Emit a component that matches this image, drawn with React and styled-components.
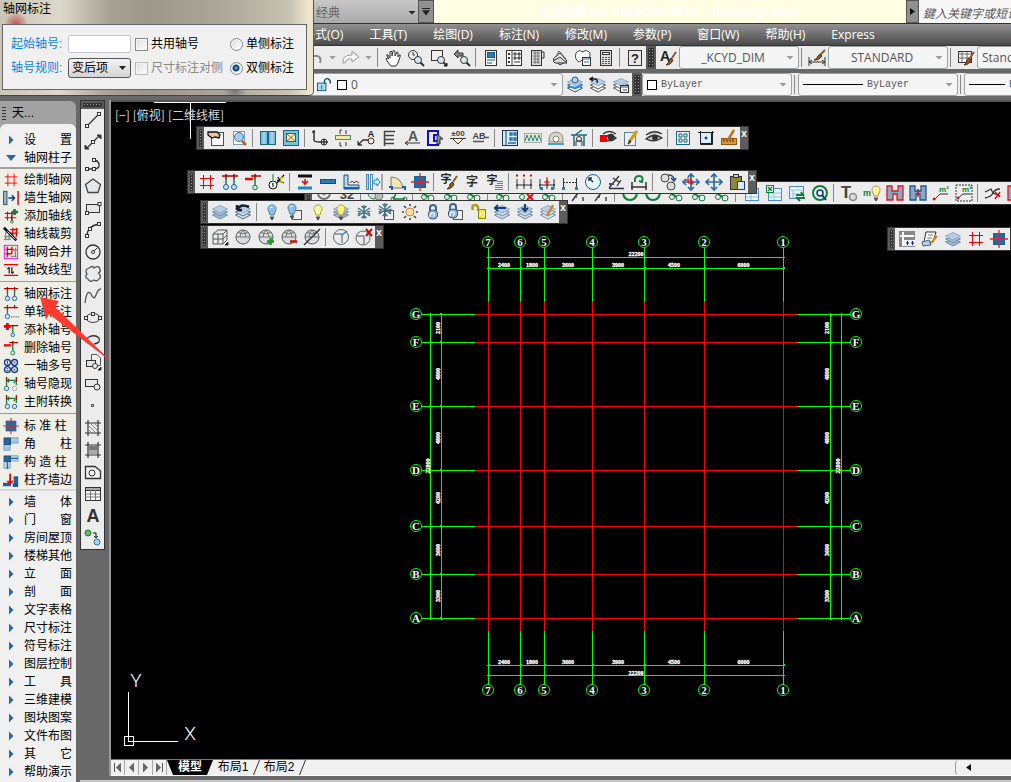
import { Fragment } from 'react'
import styled, { createGlobalStyle, css } from 'styled-components'

const P = ({ d, c = '#333', w = 1, f = 'none' }) => <path d={d} stroke={c} strokeWidth={w} fill={f} />
const C = ({ x = 9, y = 9, r = 6, c = '#333', f = 'none', w = 1 }) => <circle cx={x} cy={y} r={r} stroke={c} fill={f} strokeWidth={w} />
const R = ({ x, y, w, h, c = '#333', f = 'none' }) => <rect x={x} y={y} width={w} height={h} stroke={c} fill={f} />
const T = ({ x = 9, y = 13, s = 11, c = '#222', children }) => (
  <text x={x} y={y} fontSize={s} fill={c} fontWeight="700" textAnchor="middle">{children}</text>
)

const RED = '#f00000'
const BLUE = '#1c5f9e'
const GREEN = '#11803a'

const layersShape = (fill = '#9fb9d4', line = '#6f8eae') => (
  <>
    <P d="M1.500 12L9 9L16.500 12L9 16Z" c={line} f={fill} />
    <P d="M1.500 9L9 6L16.500 9L9 13Z" c={line} f={fill} />
    <P d="M1.500 6L9 2.500L16.500 6L9 10Z" c="#8fabc9" f="#b9cde2" />
  </>
)
const bulb = (fill, line) => (
  <>
    <P d="M9 2C5 2 4 6 6 9L7 12H11L12 9C14 6 13 2 9 2Z" c={line} f={fill} />
    <P d="M7 14.500H11M8 16H10" c="#555" w={2} />
    <P d="M7 5Q8 3.500 9.500 4" c="#fff" />
  </>
)
const snow = <P d="M9 2V16M3 5L15 13M3 13L15 5M6.500 3L9 5.500L11.500 3M6.500 15L9 12.500L11.500 15M2.500 8L5.500 9L3 11.500M15.500 8L12.500 9L15 11.500" c="#3b6f80" w={1.300} />
const lock = <><P d="M6 9V5Q6 2 9 2T12 5V9" c="#40658c" w={2} /><P d="M4.500 10Q5 7 9 7T13.500 10V13Q13 16 9 16T4.500 13Z" c="#345d8a" f="#8db4dd" /><P d="M6 14Q6 9 9 10T9 14" c="#fff" w={1.300} /></>
const brush = <><P d="M17 3L13 9" c="#8f5a29" w={2} /><P d="M12 9L14 11Q12 16 7 16Q10 14 10 11Z" c="#5c3210" f="#93561f" /></>
const lens = <><C x={11} y={11} r={3.500} f="#dde8ee" /><P d="M13.500 13.500L17 17" c="#333" w={2} /></>
const sphere = <><C r={7} c="#555" f="#d9dde1" /><P d="M2 9H16M4 4.500Q9 7 14 4.500M6 9Q6 5 9 2M12 9Q12 5 9 2" c="#777" /></>
const dimLine = <P d="M2 6V16M9 6V16M16 6V16M1 12H17M1 13L3 11M8 13L10 11M15 13L17 11" />
const roundPair = <><C x={5} y={14} r={2.500} c={BLUE} f="#cfe4f5" /><C x={13} y={14} r={2.500} c={BLUE} f="#cfe4f5" /></>
const pane = <R x={6.500} y={7.500} w={9} h={9} c="#555" f="#eee" />
const cross = <P d="M10 10L16 16M16 10L10 16" c="#e01010" w={2} />
const page = <><R x={3.500} y={2.500} w={11} h={13} c="#8a9bb4" f="#fff" /><P d="M6 6H12M6 8.500H12M6 11H10" c="#6a7f9a" /></>

const icons = {
  // drawing strip
  line: <><P d="M4 14L14 4" w={1.300} /><R x={1.500} y={13.500} w={3} h={3} f="#fff" /><R x={13.500} y={1.500} w={3} h={3} f="#fff" /></>,
  xline: <><P d="M3 15L15 3" w={1.300} /><P d="M1 16V12L5 16ZM17 2V6L13 2Z" f="#333" /><R x={7.500} y={7.500} w={3} h={3} f="#fff" /></>,
  pline: <><P d="M3 14H11Q16 13 15 9T9 5" w={1.300} /><R x={1.500} y={12.500} w={3} h={3} f="#fff" /><R x={8.500} y={12.500} w={3} h={3} f="#fff" /><R x={8.500} y={3.500} w={3} h={3} f="#fff" /></>,
  polygon: <P d="M9 2L16.500 7.500L14 15.500H4L1.500 7.500Z" c="#444" w={1.300} f="#e4e8eb" />,
  rect: <><R x={2.500} y={5.500} w={13} h={8} f="#e4e8eb" /><R x={1.500} y={12.500} w={3} h={3} f="#fff" /><R x={14} y={3.500} w={3} h={3} f="#fff" /></>,
  arc: <><P d="M3 15Q3 5 15 3" w={1.300} /><R x={1.500} y={13.500} w={3} h={3} f="#fff" /><R x={4.500} y={6.500} w={3} h={3} f="#fff" /><R x={13.500} y={1.500} w={3} h={3} f="#fff" /></>,
  circle: <><C r={7} w={1.300} f="#eef0f2" /><P d="M9 9L13 5" /><C r={1.500} f="#fff" /></>,
  cloud: <P d="M5 3Q9 0 10 3Q15 0 16 4Q17 7 14.500 8Q18 12 15 14Q13 17 10 15Q6 18 4 14Q0 12 3 9Q0 5 5 3Z" c="#555" w={1.300} f="#e8ebed" />,
  spline: <P d="M1 16Q3 1 7 7Q10 14 12 8Q14 2 17 2" c="#555" w={1.300} />,
  ellipse: <><ellipse cx="9" cy="9" rx="7" ry="4.500" fill="#e8ebed" stroke="#444" /><R x={0.500} y={7.500} w={3} h={3} f="#fff" /><R x={14.500} y={7.500} w={3} h={3} f="#fff" /><R x={7.500} y={3.500} w={3} h={3} f="#fff" /></>,
  ellipseArc: <P d="M4 12Q1 8 5 6Q11 3 15 7Q17 12 10 13" w={1.300} f="#e8ebed" />,
  insert: <><P d="M7.500 1.500H13L16.500 5V12.500H7.500Z" c="#555" f="#eee" /><R x={2.500} y={7.500} w={9} h={6} f="#dfe3e8" /><C x={11} y={13} r={2.500} f="#eee" /><P d="M17 17V14L14 17Z" f="#111" /></>,
  block: <><R x={1.500} y={4.500} w={12} h={7} f="#e4e8eb" /><C x={13} y={12} r={3} f="#e4e8eb" /></>,
  point: <R x={7.500} y={7.500} w={2} h={2} c="#555" />,
  hatch: <><P d="M1 4H17M1 14H17M4 1V17M14 1V17" w={1.200} /><P d="M4 10L8 14M4 6L12 14M6 4L14 12M10 4L14 8" c="#888" /></>,
  gradient: <><P d="M1 4H17M1 14H17M4 1V17M14 1V17" w={1.200} /><R x={5.500} y={5.500} w={7} h={4} c="#777" f="#777" /><R x={5.500} y={9.500} w={7} h={3} c="#aaa" f="#aaa" /></>,
  region: <><P d="M1.500 3.500H11L16.500 8V15.500H1.500Z" f="#eef0f2" w={1.300} /><C x={8} y={10} r={3} /></>,
  table: <><R x={1.500} y={2.500} w={15} h={13} f="#fff" /><R x={1.500} y={2.500} w={15} h={3} f="#aaa" /><P d="M1 9H16M1 12H16M6.500 5V15M11.500 5V15" c="#777" /></>,
  text: <T y={15} s={18} c="#333">A</T>,
  addSel: <><C x={4} y={4} r={3} c={GREEN} f="#76b65a" /><C x={13} y={13} r={3} c="#2878b8" f="#a8d4f5" /><P d="M9 4H12V8M10 7L12 9L14 7" c="#111" /></>,

  // axis commands
  grid: <P d="M5.500 2V16M12.500 2V16M2 5.500H16M2 12.500H16" c={RED} />,
  wallAxis: <><R x={0.500} y={1.500} w={4} h={15} c="#285070" f="#8fb4cc" /><P d="M6 9H13M10 6L13 9L10 12" c="#123a70" w={1.500} /><P d="M17 1V17" c="#c00000" w={1.500} /></>,
  axisAdd: <><P d="M5 4V14M10 4V15M2 6H15M2 11H15" c={RED} w={1.300} /><P d="M13 1V8M10 4.500H17" c={GREEN} w={3} /><P d="M10 8V14" c="#5a1010" /><C x={10} y={15.500} r={1.500} c={GREEN} /></>,
  axisCut: <><P d="M3 7V16M7 9V16M1 12H9M1 15H9" c="#888" w={1.500} /><P d="M11 2V12M15 2V12M8 4H17M8 8H17" c={RED} w={1.500} /><P d="M1 2L15 16" c="#111" w={3} /><P d="M5 6L14 15" c="#fff" /></>,
  axisMerge: <><R x={1.500} y={1.500} w={15} h={15} c="#f000f0" /><P d="M5 3V15M10 3V11M3 6H12M3 11H10" c={RED} w={1.500} /><P d="M14 4V15M9 14H15M12 7H16" c="#888" w={1.500} /></>,
  axisType: <><P d="M1 3H17M1 15H17" c={RED} w={1.500} /><P d="M7 6V13M10 6V13M5 8L7 6M10 13L12 11" c="#111" w={1.300} /></>,
  axisDim: <><P d="M1 3H17M5 1V6M13 1V6" c="#b00000" w={1.500} /><P d="M5 5V12M13 5V12" c="#1e7a46" w={1.500} />{roundPair}</>,
  axisOne: <><P d="M1 4H17M5 1V6M13 1V5" c="#c00000" w={1.500} /><P d="M5 5V11" c="#1e7a46" w={1.500} /><C x={5} y={14} r={2.500} c={BLUE} f="#cfe4f5" /><path d="M9 14.500H18" stroke="#222" strokeDasharray="1 1" /></>,
  axisPlus: <><P d="M1 5H9M5 1V9" c={RED} w={3} /><P d="M9 4H17M11 4V6" c="#b00000" w={1.300} /><P d="M11 5V12" c={GREEN} w={1.500} /><C x={11} y={14.500} r={2} c={BLUE} f="#cfe4f5" /></>,
  axisDel: <><P d="M1 6H9" c={RED} w={2.500} /><P d="M7 3H17M11 1V6" c="#b00000" w={1.500} /><P d="M11 5V12" c={GREEN} w={1.500} /><C x={11} y={14.500} r={2.300} c={GREEN} f="#cfe4f5" /></>,
  axisMulti: <><C x={5} y={5} r={3.300} c="#123a8c" w={1.500} /><C x={13} y={5} r={3.300} c="#123a8c" w={1.500} /><C x={5} y={13} r={3.300} c="#123a8c" w={1.500} /><C x={13} y={13} r={3.300} c="#123a8c" w={1.500} /><P d="M5 3V7M4 12H6M4 14H6M12 4L14 6M14 4L12 6M12 12L14 14M14 12L12 14" c="#123a8c" /></>,
  axisHide: <><P d="M4 1V7M15 1V7" c="#c00000" w={1.500} /><P d="M4 7V12M15 7V10" c={GREEN} w={1.500} /><P d="M5 5H14M7 3L5 5L7 7M12 8L14 6" c={GREEN} w={1.500} /><C x={4} y={14} r={2.500} c={BLUE} f="#cfe4f5" /><C x={13} y={14} r={2.500} c="#aaa" /></>,
  axisSwap: <><P d="M4 1V7M15 1V7" c="#c00000" w={1.500} /><P d="M4 7V12M15 7V10" c={GREEN} w={1.500} /><P d="M5 5H14M7 3L5 5L7 7M12 8L14 6" c={GREEN} w={1.500} />{roundPair}</>,
  axisKey: <><P d="M6 1V7" c={GREEN} /><P d="M10 10L17 2M10 7L17 10M11 4L13 8" c="#111" w={1.300} /><P d="M13 6L17 4M12 9H16" c="#d8d000" w={1.500} /><C x={6} y={12} r={4} c="#111" f="#fff" /><P d="M6 10V14M5 11H6" c="#111" /></>,

  // columns
  column: <><R x={3.500} y={3.500} w={11} h={11} c={BLUE} f="#1c6ca8" /><P d="M9 0V18M0 9H18" c="#f02020" w={1.300} /></>,
  corner: <><P d="M1 2H17V8H8V16H1Z" c="#6aa0c8" f="#a4c8e0" /><R x={1.500} y={2.500} w={7} h={7} c="#174a78" f="#23689c" /></>,
  builtCol: <><P d="M1 2H17V8H8V16H1Z" c="#6aa0c8" f="#c0d8ea" /><R x={1.500} y={2.500} w={7} h={6} c="#174a78" f="#23689c" /><P d="M8 5H17M5 9V17" c="#23689c" w={1.500} /></>,
  colAlign: <><P d="M0 14H9M11 15H17" c={BLUE} w={4} /><R x={12.500} y={5.500} w={4} h={9} c="#174a78" f="#23689c" /><P d="M8 2V13M5 10L8 13L11 10" c={RED} w={2} /></>,
  wallLevel: <><P d="M2 3H16" c="#111" w={3} /><P d="M2 15H16" c="#1b88c8" w={3} /><P d="M9 6V12M6 8L9 11L12 8" c={RED} w={1.500} /></>,
  wall: <R x={1.500} y={6.500} w={15} h={4} c="#1c4e7c" f="#2a7ab8" />,
  wallHatch: <><P d="M2 2H6V12H17V16H2Z" c="#1c4e7c" f="#b7d8ee" /><P d="M8 10L10 8L12 10L14 8L17 10" c="#a01818" /><P d="M2 15H17" c={BLUE} w={2} /></>,
  wallMove: <><R x={1.500} y={1.500} w={2} h={15} c="#4a8cb8" f="#a8d8f0" /><R x={5.500} y={1.500} w={2} h={15} c="#4a8cb8" f="#fff" /><P d="M9 7H12V5L15 9L12 13V11H9Z" c="#1c88d0" f="#d8f0ff" /><P d="M17 1V17" c="#666" /></>,
  doorArc: <><P d="M3 15V4Q13 4 15 15Z" f="#f0e8ac" c="#777" /><P d="M1 14H4V17M14 14H17V17" c={BLUE} w={2} /></>,

  // general tools
  hand: <P d="M5 10L3 7Q2 5 4 6L6 9V3Q7 1 8 3V7L9 2Q10 0 11 3V7L13 3Q14 2 14 5V8L15 6Q17 5 16 8L14 14L12 17H7L3 12Q1 9 3 9Z" f="#fff" />,
  handBox: <><R x={4.500} y={3.500} w={12} h={13} c="#1d6072" f="#fff" /><P d="M1 3H10L13 6L12 9L8 8L5 9L1 6Z" c="#111" f="#edc3a0" w={1.300} /></>,
  zoomClock: <><C x={6} y={6} r={4.500} f="#e8eef2" /><P d="M6 3V6H8" />{lens}</>,
  zoomBox: <><R x={1.500} y={1.500} w={11} h={10} f="#eee" />{lens}<P d="M17 14V17H14Z" f="#111" /></>,
  zoomBack: <><P d="M1 5L5 1V4H10V7H5V9Z" f="#888" />{lens}</>,
  preview: <>{page}<C x={9} y={8} r={4.500} c="#3c78b4" f="#a8cdec" /><P d="M12 12L16 16" c="#a86820" w={2.500} /></>,
  undo: <P d="M3 4L1 7L6 10M2 7H11Q16 8 14 14" c="#888" w={2} />,
  redo: <P d="M1 14Q0 7 8 6H10V2L17 8L10 13V10H7Q4 10 3 14Z" c="#999" f="#f8f8f8" />,
  props: <><R x={3.500} y={1.500} w={11} h={15} f="#fff" /><R x={5.500} y={3.500} w={7} h={5} c="#17578c" f="#2c79b8" /><P d="M5 11H13M5 14H10" c="#17578c" /></>,
  center: <><R x={1.500} y={1.500} w={15} h={15} f="#fff" /><P d="M4 4V6M4 8V10M4 12V14" w={2} /><P d="M7 2V16" /><P d="M9 4H11V6H9ZM13 4H15V6H13ZM9 8H11V10H9ZM13 8H15V10H13Z" f="#ccc" /><P d="M9 13H15" /></>,
  palettes: <><R x={3.500} y={1.500} w={10} h={15} f="#ddd" /><P d="M5 4H12M5 7H12M5 10H12M5 13H12M7 2V15M10 2V15" c="#777" /><P d="M13 3H16V9H13" /></>,
  sheets: <><P d="M2 10L9 4L16 12L9 16Z" f="#eee" /><P d="M5 8L8 2L15 10" c="#555" /><P d="M2 12L9 8L16 14H4Z" f="#d8d8d8" /></>,
  markup: <><P d="M2 4Q5 0 8 3Q13 0 16 4Q17 8 14 9Q8 10 5 13Q0 10 2 4Z" c="#444" f="#fff" /><R x={8.500} y={8.500} w={8} h={8} f="#fff" /><P d="M8 10H16M10 13H15" c="#2c79b8" /></>,
  calc: <><R x={3.500} y={1.500} w={11} h={15} f="#ddd" /><R x={5.500} y={3.500} w={7} h={2} f="#fff" /><path d="M6 8V15M9 8V15M12 8V15" stroke="#555" strokeWidth="2" strokeDasharray="1 1" /></>,
  help: <><R x={2.500} y={1.500} w={13} h={15} f="#e8e8e8" /><T y={14} s={13}>?</T></>,
  textStyle: <><T x={6} y={12} s={14}>A</T>{brush}</>,
  dimStyle: <><P d="M1 8V17M17 8V17M1 13H17M4 11L1 13L4 15M14 11L17 13L14 15" /><P d="M17 1L12 6" c="#8f5a29" w={2} /><P d="M12 5L14 7Q11 12 6 11Q9 10 10 7Z" c="#5c3210" f="#93561f" /></>,
  tableStyle: <><R x={1.500} y={2.500} w={13} h={11} f="#fff" /><P d="M1 5H14M1 9H14M5 3V13M10 3V13" c="#666" />{brush}</>,
  unlock: <><R x={1.500} y={7.500} w={9} h={8} c="#20546c" f="#a8def5" /><P d="M9 8V5Q10 2 13 3Q16 5 15 8" c="#20546c" w={1.500} /><P d="M6 10V14" c="#20546c" /></>,

  // layers
  layers: layersShape(),
  layersDark: <>{layersShape('#d5dfe8', '#4d708a')}<P d="M3 7Q6 0 15 4M3 7L3 2M3 7L8 7" c="#123" w={2.500} /></>,
  layerTop: <>{layersShape('#fff', '#38566e')}<C x={9} y={4} r={3} c="#38566e" f="#a8d8f5" /><P d="M2 10L9 12L16 9" c="#1d8be0" w={2} /></>,
  layerPrev: <>{layersShape('#fff', '#555')}<P d="M1 3H7Q9 4 8 7M4 1L1 3L4 5" c="#111" w={1.300} /></>,
  layerState: <>{layersShape('#fff', '#555')}<R x={8.500} y={9.500} w={8} h={7} f="#fff" /><P d="M9 11H16M11 14H15" c="#17578c" /></>,
  layerBack: <>{layersShape('#cfdae6')}<P d="M2 5H13M5 2L2 5L5 8" c="#183f70" w={2} /></>,
  layerDown: <>{layersShape('#cfdae6')}<P d="M9 1V8M6 5L9 8L12 5" c="#183f70" w={2} /></>,
  layerEdit: <>{layersShape('#e2eaf1')}<P d="M14 2L8 13" c="#d48418" w={2.500} /></>,
  bulbBlue: bulb('#8fc0e8', '#4880ac'),
  bulbPane: <>{pane}<g transform="translate(-3 -1)">{bulb('#8fc0e8', '#4880ac')}</g></>,
  bulbOn: bulb('#fff8a0', '#b0a030'),
  bulbLayer: <>{layersShape()}{bulb('#ffef80', '#c0a030')}</>,
  snow,
  snowPane: <>{pane}<g transform="translate(-2 -2)">{snow}</g></>,
  sun: <><C r={4} c="#c08838" f="#ffe0a8" /><P d="M9 1V3M9 15V17M1 9H3M15 9H17M3 3L5 5M13 13L15 15M3 15L5 13M13 5L15 3" c="#444" w={1.500} /></>,
  lock,
  lockPane: <>{pane}<g transform="translate(-3 -1)">{lock}</g></>,
  lockOpen: <><P d="M3 7Q1 2 5 2T8 8" c="#a8a010" w={2.500} /><R x={8.500} y={6.500} w={7} h={9} c="#8c8600" f="#f0e848" /><P d="M10 13Q12 7 14 10T13 14" c="#fff" /></>,

  // solids
  box: <><P d="M2 6L7 2H16V12L12 16H2ZM2 6H12V16M12 6L16 2M7 6V16M2 11H12L16 7" f="#e8ecef" c="#555" /><P d="M17 14V17H14Z" f="#111" /></>,
  sphere,
  sphereAdd: <>{sphere}<P d="M10 13.500H17M13.500 10V17" c="#16a016" w={2.500} /></>,
  sphereSub: <>{sphere}<P d="M10 13.500H17" c="#c01010" w={2.500} /></>,
  sphereCut: <>{sphere}<P d="M1 17L17 1" w={1.500} /></>,
  cube: <><C r={7.500} c="#666" f="#e8ecef" /><P d="M3 6H10V15" c="#555" /><P d="M10 7L15 3" c="#1880d8" w={1.500} /></>,
  cubeDel: <><C x={8} y={10} r={7} c="#666" f="#e8ecef" /><P d="M2 8H9V16" c="#555" /><P d="M11 1L17 8M17 1L11 8" c="#c01010" w={2} /></>,

  // architecture
  windowDouble: <><R x={1.500} y={2.500} w={15} h={13} c="#1e6288" f="#7cc0e0" /><P d="M9 2V16" c="#1e6288" w={2} /><P d="M5 3V15M13 3V15" c="#c8e8f4" /></>,
  windowCross: <><R x={1.500} y={1.500} w={15} h={15} c="#1e6288" f="#7cc0e0" /><R x={4.500} y={4.500} w={9} h={8} c="#555" f="#f4eca0" /><P d="M5 5L13 12M13 5L5 12" c="#777" /></>,
  pipe: <><P d="M1 3H4M3 1V11Q3 13 9 13H17M13 10V16" w={1.500} /><C x={13} y={13} r={3} /></>,
  beam: <><R x={1.500} y={6.500} w={15} h={4} c="#3e88a8" f="#eeeaa8" /><P d="M6 1V5M6 1H8M12 1V5M6 13V17M6 17H8M12 13V17" c="#333" /></>,
  leader: <><P d="M1 16L6 11H12M1 16V12M1 16H5" w={1.300} /><T x={14} y={8} s={9}>A</T><C x={14} y={12} r={3} /></>,
  elevation: <P d="M4.500 2V17M4 2.500H15M4 6.500H14M4 10.500H14M4 14.500H14" c="#444" w={1.500} />,
  textA: <><T x={10} y={12} s={14} c="#555">A</T><P d="M2 14H17M5 12L2 14L5 16" /></>,
  stair: <><P d="M2 2H12V6H8V12H12V16H2Z" c="#1010c8" w={2} /><P d="M11 5L17 10H14V15H11Z" c="#333" f="#888" /></>,
  level: <><T y={7} s={8} c="#444">±00</T><P d="M1 9.500H17M4 10L9 15L14 10" f="#fff8cc" /></>,
  ab: <><T x={7} y={10} s={9} c="#444">AB</T><P d="M1 12.500H12M13 8.500H17" c="#555" w={1.300} /></>,
  plan: <><R x={1.500} y={1.500} w={15} h={15} c="#1a3660" f="#d8ecfa" /><P d="M5 2V16M9 4H11V6H9ZM13 4H15V6H13ZM9 9H11V11H9ZM13 9H15V11H13ZM7 14H15" c="#2868a8" w={1.300} /></>,
  wave: <><R x={0.500} y={4.500} w={17} h={9} c="#aa9" f="#ecebc0" /><P d="M1 12L3 6L5 12L7 6L9 12L11 6L13 12L15 6L17 12" c="#258aa8" /></>,
  dome: <><P d="M2 13Q1 4 9 3Q17 4 16 13Z" c="#888" f="#dcd8c0" /><C x={9} y={10} r={3} c="#888" f="#fff" /><P d="M1 15H17" c="#4a9fc0" w={2} /></>,
  house: <><P d="M1 6H17M4 6V17M14 6V17M5 6L12 1" c="#216b84" w={1.500} /><C y={10} r={2.500} /><P d="M6 17V12H12V17" /></>,
  eye: <><P d="M1 6Q9 0 17 5M1 10Q9 3 17 9Q9 14 1 10Z" c="#333" f="#ccc" w={1.300} /><C x={10} y={8.500} r={2.500} f="#333" /></>,
  eyeRed: <><P d="M4 5Q10 0 17 5M5 10Q10 3 17 9Q12 14 5 10Z" w={1.500} /><C x={12} y={8} r={3} f="#333" /><R x={1.500} y={6.500} w={6} h={6} c={RED} f={RED} /></>,
  edit: <><R x={2.500} y={3.500} w={11} h={13} c="#68809c" f="#e8f2fc" /><P d="M15 2L7 13" c="#d89818" w={3} /><P d="M8 11L6 15L9 13" f="#333" /></>,
  views: <><R x={2.500} y={2.500} w={13} h={13} c="#1a6690" /><P d="M5 5H8V8H5ZM10 5H13V8H10ZM5 10H8V13H5ZM10 10H13V13H10Z" c="#1a6690" /></>,
  viewDot: <><P d="M1 3.500H17M3.500 2V15.500H15.500V2" c="#222" /><R x={3.500} y={3.500} w={11} h={11} c="#222" f="#d8eefc" /><C r={1} f="#111" /></>,
  ruler: <><R x={1.500} y={9.500} w={15} h={6} c="#8c5814" f="#d89838" /><P d="M4 10V13M7 10V13M10 10V13M13 10V13" /><P d="M14 1L8 11" c="#b87820" w={2.500} /></>,
  ziBrush: <><T x={6} y={10} s={11}>字</T>{brush}</>,
  zi: <T y={13} s={12} c="#333">字</T>,
  ziPara: <><T x={6} y={11} s={11}>字</T><P d="M11 8.500H17M11 10.500H17M9 12.500H17M9 14.500H17M9 16.500H17" c="#4888c0" /></>,
  dimRed: <>{dimLine}<P d="M2 1V4M9 1V4M16 1V4M1 2.500H3M8 2.500H10M15 2.500H17" c={RED} /></>,
  dimMid: <>{dimLine}<P d="M9 4V13M6 9H12" c={RED} /><P d="M2 15.500H5M13 15.500H16" c="#1880d0" w={3} /></>,
  dimDash: <><P d="M2.500 5V14M15.500 5V14" /><path d="M2 9.500H16" stroke="#333" strokeDasharray="2 1" /><P d="M1 15.500H4M14 15.500H17" c="#1880d0" w={3} /></>,
  compass: <><C r={7.500} c="#1c5f9e" f="#eaf4fb" /><P d="M9 9L5 5M5 8V5H8" w={1.500} /></>,
  angle: <><P d="M2 15L12 3M2 15.500H17M6 5L12 9M10 13L14 7" w={1.300} /><P d="M2 11H7" c={BLUE} w={2} /></>,
  dimTurn: <><P d="M2 9V17M16 9V17M1 14H17" w={1.500} /><P d="M5 9Q4 3 9 3T12 9L9 8" c={GREEN} w={2} /></>,
  chain: <><C x={6} y={5} r={4} c="#444" f="#ddd" /><C x={12} y={13} r={4} c="#444" f="#ddd" /><P d="M9 2Q15 2 15 7M12 5L15 8L17 5" c="#17578c" w={1.500} /></>,
  move: <P d="M9 2V16M2 9H16M6 4L9 1L12 4M6 14L9 17L12 14M4 6L1 9L4 12M14 6L17 9L14 12" c="#2a6ba8" w={1.700} />,
  moveRed: <><P d="M9 2V16M2 9H16M6 4L9 1L12 4M6 14L9 17L12 14M4 6L1 9L4 12M14 6L17 9L14 12" c="#2a6ba8" w={1.700} /><P d="M3 7H10V12M6 4V10H12" c={RED} /></>,
  paste: <><R x={2.500} y={3.500} w={11} h={13} c="#333" f="#8c8838" /><R x={5.500} y={1.500} w={5} h={3} f="#ccc" /><R x={9.500} y={8.500} w={7} h={8} c="#1d3890" f="#dce8fa" /></>,

  // attributes bar
  gear: <><C r={6} c="#777" w={2} /><C r={2} c="#777" /></>,
  num: <T y={15} s={13} c="#444">32</T>,
  greenTri: <><C x={7} r={6} c={GREEN} f="#ddd" /><C x={12} y={12} r={4} c="#777" f="#bbb" /></>,
  node: <><P d="M3 15L9 4M3 15H15" c={GREEN} w={1.500} /><C x={3} y={15} r={2} c={GREEN} /><C x={15} y={15} r={2} c={GREEN} /></>,
  nodes: <><C x={5} y={13} r={2.500} c={GREEN} /><C x={12} y={14} r={3} c={GREEN} /><P d="M3 9L10 13" c={GREEN} w={2} /></>,
  nodesDel: <><C x={5} y={13} r={2.500} c={GREEN} />{cross}</>,
  tool: <P d="M3 17L12 5M5 13H8M14 13V17" c="#444" w={1.500} />,
  arcGreen: <P d="M2 9Q3 16 9 16T16 9" c={GREEN} w={2} />,
  sheetGreen: <><R x={3.500} y={4.500} w={13} h={12} c="#4a8cc8" f="#eaf4ff" /><P d="M4 9H16M4 13H16M9 9V16" c="#98c0e0" /><R x={1.500} y={1.500} w={7} h={7} c={GREEN} f="#fff" /><P d="M3 3L7 7M7 3L3 7" c={GREEN} w={1.500} /></>,
  sheetSync: <><R x={1.500} y={2.500} w={14} h={12} c="#4a8cc8" f="#eaf4ff" /><P d="M1 6H15M5 6V14M5 10H15" c="#98c0e0" /><P d="M8 11H15L13 8M17 14H9L12 17" c={GREEN} w={2} /></>,
  findQ: <><C x={9} y={9} r={7} c={GREEN} w={2} /><C x={9} y={9} r={3} c="#123a70" w={1.500} /><P d="M11 11L15 16" c="#123a70" w={2} /></>,
  tGear: <><T x={6} y={14} s={17} c="#444">T</T><C x={13} y={13} r={3.500} c="#888" w={1.500} f="#ddd" /></>,
  mBulb: <><T x={4} y={12} s={9} c={GREEN}>m</T><g transform="translate(4 0)">{bulb('#fff3a0', '#b09838')}</g></>,
  bindRed: <P d="M1 2H6V7H12V2H17V16H11V10H7V16H1Z" c="#e01818" w={1.300} f="#8aa8c4" />,
  bindBlue: <><P d="M1 2H6V7H12V2H17V16H11V10H7V16H1Z" c="#20568c" w={1.300} f="#8aa8c4" /><P d="M9 5V13" c={RED} w={1.500} /></>,
  area: <><P d="M2 16L8 10H16" /><C x={2} y={15} r={1} c={RED} f={RED} /><T x={12} y={8} s={8} c={GREEN}>m²</T></>,
  areaBox: <><rect x="1" y="1" width="16" height="16" fill="none" stroke="#333" strokeDasharray="2 1" /><P d="M3 14L8 10H16" /><C x={3} y={14} r={1} c={RED} f={RED} /><T x={12} y={8} s={8} c={GREEN}>m²</T></>,
  coilRed: <><P d="M1 14Q7 13 9 9T16 5M1 8L7 5L9 9L16 12" w={1.300} /><P d="M11 8L16 13M16 8L11 15" c={RED} w={1.300} /></>,
  navGrid: <><R x={1.500} y={1.500} w={15} h={15} c="#888" f="#888" /><P d="M5 2V16M2 6H16" c="#fff" w={2} /><R x={6.500} y={10.500} w={10} h={5} c="#eef" f="#eef" /><P d="M8 13H11M13 13H16M9.500 11V15M14.500 11V15" c="#1020b0" /></>,
  noteBook: <><P d="M5 2H15L12 12H3Z" f="#fff" /><P d="M7 5H12M6 8H11" c="#777" /><P d="M1 12L8 10L10 15L2 16Z" c="#356a94" f="#b0d0e8" /><P d="M16 6L10 13" c="#d48418" w={2} /></>,
}

const Icon = ({ name, size = 18 }) => (
  <svg width={size} height={size} viewBox="0 0 18 18" fontFamily="'Liberation Sans', 'Noto Sans CJK SC', sans-serif" aria-hidden="true">
    {icons[name]}
  </svg>
)

// '|' stands for a separator
const strips = [
  { id: 'attr', x: 193, y: 79, open: true, items: 'gear num | greenTri node | nodes nodes nodes | nodes nodesDel nodes | tool tool | arcGreen arcGreen nodes nodes nodes | sheetGreen sheetGreen sheetSync findQ | tGear mBulb bindRed bindBlue area areaBox | coilRed bindRed' },
  { id: 'common', x: 85, y: 24, items: 'handBox preview | windowDouble windowCross | pipe beam leader elevation textA stair level ab | plan wave dome house | eyeRed edit eye | views viewDot ruler' },
  { id: 'axis', x: 76, y: 68, items: 'grid axisDim axisDel axisKey | wallLevel wall wallHatch wallMove doorArc column | ziBrush zi ziPara | dimRed dimMid dimDash compass angle dimTurn | chain moveRed move paste' },
  { id: 'layer', x: 89, y: 98, items: 'layers layersDark | bulbBlue bulbPane bulbOn bulbLayer snow snowPane sun lock lockPane lockOpen layerBack layerDown layerEdit' },
  { id: 'solid', x: 89, y: 123, items: 'box sphere sphereAdd sphereSub sphereCut | cube cubeDel' },
  { id: 'custom', x: 776, y: 125, open: true, items: 'navGrid noteBook layers grid column' },
]

const drawTools = 'line xline pline polygon rect arc circle cloud spline ellipse ellipseArc insert block point hatch gradient region table text addSel'.split(' ')

const axisCmds = [
  [['绘制轴网', 'grid'], ['墙生轴网', 'wallAxis'], ['添加轴线', 'axisAdd'], ['轴线裁剪', 'axisCut'], ['轴网合并', 'axisMerge'], ['轴改线型', 'axisType']],
  [['轴网标注', 'axisDim'], ['单轴标注', 'axisOne'], ['添补轴号', 'axisPlus'], ['删除轴号', 'axisDel'], ['一轴多号', 'axisMulti'], ['轴号隐现', 'axisHide'], ['主附转换', 'axisSwap']],
  [['标 准 柱', 'column'], ['角　　柱', 'corner'], ['构 造 柱', 'builtCol'], ['柱齐墙边', 'colAlign']],
]

const groups = ['墙　　体', '门　　窗', '房间屋顶', '楼梯其他', '立　　面', '剖　　面', '文字表格', '尺寸标注', '符号标注', '图层控制', '工　　具', '三维建模', '图块图案', '文件布图', '其　　它', '帮助演示']

const menus = ['格式(O)', '工具(T)', '绘图(D)', '标注(N)', '修改(M)', '参数(P)', '窗口(W)', '帮助(H)', 'Express']

const cols = [['7', 377], ['6', 409], ['5', 433], ['4', 481], ['3', 533], ['2', 593], ['1', 672]]
const colDims = ['2400', '1800', '3600', '3900', '4500', '6000']
const rows = [['G', 212], ['F', 240], ['E', 304], ['D', 368], ['C', 424], ['B', 472], ['A', 516]]
const rowDims = ['2100', '4800', '4800', '4200', '3600', '3300']

const Bubble = ({ x, y, label }) => (
  <>
    <circle cx={x} cy={y} r="5.500" fill="none" stroke="#0f0" />
    <AxisText x={x} y={y + 4}>{label}</AxisText>
  </>
)

const Dim = ({ x, y, turn, children }) => (
  <DimText x={x} y={y} transform={turn ? `rotate(-90 ${x} ${y})` : undefined}>{children}</DimText>
)

const Drawing = () => (
  <Sheet role="img" aria-label="轴网">
    <g shapeRendering="crispEdges">
      {rows.map(([label, y]) => (
        <Fragment key={label}>
          <path d={`M311 ${y}.5H364M686 ${y}.5H739`} stroke="#0f0" />
          <path d={`M364 ${y}.5H686`} stroke="#f00" />
          <path d={`M329 ${y - 1}h2v2h-2zM719 ${y}h2v2h-2z`} fill="#0f0" />
        </Fragment>
      ))}
      {cols.map(([label, x]) => (
        <Fragment key={label}>
          <path d={`M${x}.5 146V200M${x}.5 529V583`} stroke="#0f0" />
          <path d={`M${x}.5 200V529`} stroke="#f00" />
          <path d={`M${x} 165h2v2h-2zM${x} 562h2v2h-2z`} fill="#0f0" />
        </Fragment>
      ))}
      <path d="M376 155.500H674M376 166.500H674M376 563.500H674M376 573.500H674M319.500 211V518M330.500 211V518M719.500 211V518M730.500 211V518" stroke="#0f0" />
      <path d="M43 0.500H115M79.500 0V37M17.500 590V639H67M13.500 634.500h9v9h-9z" stroke="#fff" fill="none" />
    </g>
    {cols.map(([label, x]) => (
      <Fragment key={label}>
        <Bubble x={x} y={140} label={label} />
        <Bubble x={x} y={588} label={label} />
      </Fragment>
    ))}
    {rows.map(([label, y]) => (
      <Fragment key={label}>
        <Bubble x={305} y={y} label={label} />
        <Bubble x={745} y={y} label={label} />
      </Fragment>
    ))}
    {colDims.map((text, i) => {
      const mid = (cols[i][1] + cols[i + 1][1]) / 2
      return (
        <Fragment key={i}>
          <Dim x={mid} y={165}>{text}</Dim>
          <Dim x={mid} y={562}>{text}</Dim>
        </Fragment>
      )
    })}
    {rowDims.map((text, i) => {
      const mid = (rows[i][1] + rows[i + 1][1]) / 2
      return (
        <Fragment key={i}>
          <Dim x={329} y={mid} turn>{text}</Dim>
          <Dim x={718} y={mid} turn>{text}</Dim>
        </Fragment>
      )
    })}
    <Dim x={525} y={154}>22200</Dim>
    <Dim x={525} y={573}>22200</Dim>
    <Dim x={319} y={364} turn>22800</Dim>
    <Dim x={729} y={364} turn>22800</Dim>
    <UcsText x={25} y={585}>Y</UcsText>
    <UcsText x={79} y={638}>X</UcsText>
  </Sheet>
)

const Strip = ({ strip }) => (
  <FloatStrip $x={strip.x} $y={strip.y}>
    <Grip />
    {strip.items.split(' ').map((name, i) =>
      name === '|' ? <Sep key={i} /> : <ToolButton key={i} aria-label={name}><Icon name={name} /></ToolButton>
    )}
    {!strip.open && <CloseButton aria-label="关闭">x</CloseButton>}
  </FloatStrip>
)

const Tools = ({ names }) => names.split(' ').map((name, i) => (
  <ToolButton key={i} aria-label={name}><Icon name={name} /></ToolButton>
))

const ComboBox = ({ width, label, value, mono, center, swatch, rule, children }) => (
  <Combo $width={width}>
    {children}
    {swatch && <Swatch />}
    {rule && <Rule $width={rule} />}
    <ComboSelect aria-label={label} $mono={mono} $center={center}>
      <option>{value}</option>
    </ComboSelect>
    <Caret />
  </Combo>
)

function App() {
  return (
    <Page>
      <GlobalStyle />
      <TitleBar>
        <WorkspacePick>
          <select aria-label="工作空间"><option>经典</option></select>
          <Caret $dark />
        </WorkspacePick>
        <TitleButton aria-label="自定义"><Caret $dark $bar /></TitleButton>
        <AppTitle>
          <span>天正建筑 For AutoCAD 2012</span>
          <span>Drawing1.dwg</span>
        </AppTitle>
        <TitleButton $narrow aria-label="展开"><Triangle $dark /></TitleButton>
        <Search aria-label="搜索" placeholder="鍵入关键字或短语" />
      </TitleBar>
      <MenuBar>
        {menus.map(m => <MenuLink href="#" key={m}>{m}</MenuLink>)}
      </MenuBar>

      <BarRow>
        <Bar $lead={303}>
          <Tools names="undo" />
          <DropButton aria-label="放弃列表"><Caret $small /></DropButton>
          <Tools names="redo" />
          <DropButton aria-label="重做列表"><Caret $small /></DropButton>
          <Sep />
          <Tools names="hand zoomClock zoomBox zoomBack" />
          <Sep />
          <Tools names="props center palettes sheets markup calc" />
          <Sep />
          <Tools names="help" />
        </Bar>
        <Grip $wide />
        <Bar $grow>
          <Tools names="textStyle" />
          <ComboBox width={120} label="文字样式" value="_KCYD_DIM" center />
          <Sep />
          <Tools names="dimStyle" />
          <ComboBox width={120} label="标注样式" value="STANDARD" center />
          <Sep />
          <Tools names="tableStyle" />
          <ComboBox width={120} label="表格样式" value="Standard" />
        </Bar>
      </BarRow>
      <BarRow>
        <Bar $lead={301}>
          <ComboBox width={262} label="图层" value="0">
            <LockSlot><Icon name="unlock" size={17} /></LockSlot>
            <Swatch />
          </ComboBox>
          <Tools names="layerTop layerPrev layerState" />
        </Bar>
        <Grip $wide />
        <Bar $grow>
          <ComboBox width={150} label="颜色" value="ByLayer" mono swatch />
          <Sep />
          <ComboBox width={160} label="线型" value="ByLayer" mono rule={60} />
          <Sep />
          <ComboBox width={160} label="线宽" value="ByLayer" mono rule={36} />
        </Bar>
      </BarRow>

      <Main>
        <Sidebar>
          <SideHead><Dots />天...</SideHead>
          <SideList>
            <SideItem><Triangle />设　　置</SideItem>
            <SideItem><Triangle $down />轴网柱子</SideItem>
            <SubMenu>
              {axisCmds.map((set, i) => (
                <SubSet key={i}>
                  {set.map(([label, icon]) => (
                    <SideItem key={label}><Icon name={icon} size={16} />{label}</SideItem>
                  ))}
                </SubSet>
              ))}
            </SubMenu>
            {groups.map(g => <SideItem key={g}><Triangle />{g}</SideItem>)}
          </SideList>
        </Sidebar>

        <Workspace>
          <WorkRow>
            <DrawBar>
              <Grip $flat />
              {drawTools.map(name => (
                <ToolButton key={name} $tall aria-label={name}><Icon name={name} /></ToolButton>
              ))}
            </DrawBar>
            <Viewport>
              <Canvas>
                <Drawing />
                <ViewControls>
                  <button>[−]</button>
                  <button>[俯视]</button>
                  <button>[二维线框]</button>
                </ViewControls>
                {strips.map(s => <Strip key={s.id} strip={s} />)}
              </Canvas>
              <TabRow>
                <TabNav aria-label="第一个"><i /><Triangle $gray $left /></TabNav>
                <TabNav aria-label="上一个"><Triangle $gray $left /></TabNav>
                <TabNav aria-label="下一个"><Triangle $gray /></TabNav>
                <TabNav aria-label="最后一个"><Triangle $gray /><i /></TabNav>
                <Tab $active>模型</Tab>
                <Tab>布局1</Tab>
                <Tab>布局2</Tab>
                <ScrollButton aria-label="向左滚动"><Triangle $left $dark /></ScrollButton>
              </TabRow>
            </Viewport>
          </WorkRow>
          <CommandLine />
        </Workspace>
      </Main>

      <Dialog aria-label="轴网标注">
        <DialogTitle>轴网标注</DialogTitle>
        <DialogBody>
          <FieldLabel htmlFor="axis-start">起始轴号:</FieldLabel>
          <TextField id="axis-start" />
          <Choice><input type="checkbox" />共用轴号</Choice>
          <Choice><input type="radio" name="side" />单侧标注</Choice>
          <FieldLabel htmlFor="axis-rule">轴号规则:</FieldLabel>
          <RuleBox>
            <select id="axis-rule"><option>变后项</option></select>
            <Caret $dark $small />
          </RuleBox>
          <Choice $off><input type="checkbox" disabled />尺寸标注对侧</Choice>
          <Choice><input type="radio" name="side" defaultChecked />双侧标注</Choice>
        </DialogBody>
      </Dialog>

      <Pointer width="80" height="72" viewBox="0 0 80 72" aria-hidden="true">
        <path d="M3 2L22 6L18 12L76 68L12 19L9 25Z" fill="#ff3b30" />
      </Pointer>
    </Page>
  )
}

export default App

const GlobalStyle = createGlobalStyle`
  * {
    box-sizing: border-box;
  }

  body {
    margin: 0;
    overflow: hidden;
    font: 12px/18px 'Liberation Sans', 'Noto Sans CJK SC', sans-serif;
    color: #000;
  }

  button, input, select {
    margin: 0;
    padding: 0;
    border: 0;
    border-radius: 0;
    background: none;
    font: inherit;
    color: inherit;
  }

  svg {
    display: block;
    overflow: visible;
  }
`

const Page = styled.div`
  position: relative;
  display: flex;
  flex-direction: column;
  height: 100vh;
  overflow: hidden;
  background: #686868;
`

const TitleBar = styled.header`
  display: flex;
  flex: none;
  height: 24px;
  border-bottom: 1px solid #333;
  background: #fffde2;
`

const WorkspacePick = styled.div`
  display: flex;
  align-items: center;
  width: 418px;
  padding: 2px 2px 0 316px;
  color: #666;
  background: linear-gradient(#c8c8c8, #aaa);

  select {
    flex: 1;
    min-width: 0;
    height: 20px;
    appearance: none;
  }
`

const TitleButton = styled.button`
  display: flex;
  align-items: center;
  justify-content: center;
  flex: none;
  width: ${p => (p.$narrow ? 13 : 16)}px;
  border: 1px solid #555;
  background: #909090;
`

const AppTitle = styled.div`
  display: flex;
  flex: 1;
  justify-content: center;
  gap: 16px;
  padding: 3px 4px 0 0;
  font-family: 'Open Sans', 'Noto Sans CJK SC', sans-serif;
  font-weight: 700;
  color: #fff;
`

const Search = styled.input`
  width: 92px;
  padding: 4px 0 0 4px;
  background: #f6f6f6;
  font-style: italic;

  &::placeholder {
    color: #555;
  }
`

const MenuBar = styled.nav`
  display: flex;
  flex: none;
  gap: 26px;
  height: 22px;
  padding-left: 303px;
  border-bottom: 1px solid #333;
  background: linear-gradient(#929292, #4a4a4a);
  font-family: 'Open Sans', 'Noto Sans CJK SC', sans-serif;
`

const MenuLink = styled.a`
  line-height: 21px;
  color: #fff;
  text-decoration: none;
  white-space: nowrap;
`

const BarRow = styled.div`
  display: flex;
  flex: none;
  height: 23px;
  margin-bottom: 4px;
`

const Bar = styled.div`
  display: flex;
  flex: ${p => (p.$grow ? '1' : 'none')};
  min-width: 0;
  padding-left: ${p => p.$lead || 0}px;
  overflow: hidden;
  background: #ececec;
`

const Grip = styled.div`
  flex: none;
  width: ${p => (p.$wide ? 10 : 7)}px;
  border: 2px solid #5a5a5a;
  background-color: #5a5a5a;
  background-image: radial-gradient(#999 35%, #333 40%);
  background-size: 3px 3px;
  ${p => p.$flat && css`
    width: auto;
    height: 8px;
  `}
`

const Sep = styled.div`
  flex: none;
  width: 6px;
  border: 2px solid #ececec;
  border-right-width: 3px;
  background: #888;
`

const ToolButton = styled.button`
  display: flex;
  flex: none;
  align-items: center;
  justify-content: center;
  width: 23px;
  ${p => p.$tall && css`
    height: 22px;
  `}
`

const DropButton = styled(ToolButton)`
  width: 13px;
`

const Caret = styled.span`
  flex: none;
  width: ${p => (p.$small ? 7 : 8)}px;
  height: ${p => (p.$bar ? 8 : 4)}px;
  background: ${p => (p.$dark ? '#222' : '#999')};
  clip-path: ${p => (p.$bar ? 'polygon(0 0, 100% 0, 100% 20%, 0 20%, 0 35%, 100% 35%, 50% 100%, 0 35%)' : 'polygon(0 0, 100% 0, 50% 100%)')};
  pointer-events: none;
`

const Triangle = styled.span`
  justify-self: center;
  width: ${p => (p.$down ? 10 : 5)}px;
  height: ${p => (p.$down ? 6 : p.$dark ? 7 : 10)}px;
  background: ${p => (p.$dark ? '#111' : p.$gray ? '#666' : '#2b68a0')};
  clip-path: ${p => {
    if (p.$down) return 'polygon(0 0, 100% 0, 50% 100%)'
    if (p.$left) return 'polygon(100% 0, 100% 100%, 0 50%)'
    return 'polygon(0 0, 100% 50%, 0 100%)'
  }};
`

const Combo = styled.div`
  display: flex;
  flex: none;
  align-items: center;
  gap: 4px;
  width: ${p => p.$width}px;
  padding: 0 4px;
  border: 1px solid #98a4a4;
  border-radius: 3px;
  background: #f5f5f5;
`

const ComboSelect = styled.select`
  flex: 1;
  min-width: 0;
  height: 20px;
  appearance: none;
  font: ${p => (p.$mono ? "10px 'Liberation Mono', monospace" : "12px 'Open Sans', sans-serif")};
  text-align-last: ${p => (p.$center ? 'center' : 'left')};
  color: #555;
`

const Swatch = styled.span`
  flex: none;
  width: 10px;
  height: 10px;
  border: 1px solid #000;
  background: #fff;
`

const LockSlot = styled.span`
  padding-left: 10px;
`

const Rule = styled.span`
  flex: none;
  width: ${p => p.$width}px;
  height: 1px;
  background: #000;
`

const Main = styled.main`
  display: flex;
  flex: 1;
  min-height: 0;
`

const Sidebar = styled.aside`
  display: flex;
  flex-direction: column;
  flex: none;
  width: 76px;
  padding-top: 1px;
`

const SideHead = styled.div`
  display: flex;
  flex: none;
  align-items: center;
  gap: 6px;
  height: 30px;
  margin-bottom: -7px;
  padding: 0 0 6px 2px;
  border-radius: 0 6px 0 0;
  background: #a2a2a2;
`

const Dots = styled.span`
  width: 4px;
  height: 14px;
  background-image: radial-gradient(#333 35%, transparent 45%);
  background-size: 2px 3px;
`

const SideList = styled.div`
  flex: 1;
  min-height: 0;
  padding-top: 7px;
  overflow: hidden;
  border-radius: 6px 6px 0 0;
  background: #f0f0f0;
`

const SideItem = styled.button`
  display: grid;
  grid-template-columns: 16px auto;
  align-items: center;
  gap: 5px;
  width: 100%;
  height: 18px;
  padding-left: 3px;
  text-align: left;
  white-space: pre;
`

const SubMenu = styled.div`
  padding: 2px 0 0;
  border-top: 2px solid #a0a0a0;
  border-bottom: 2px solid #d8d8d8;
  margin-bottom: 2px;
  background: #efefe8;
`

const SubSet = styled.div`
  & + & {
    margin-top: 2px;
    padding-top: 3px;
    border-top: 1px solid #999;
  }
`

const Workspace = styled.section`
  display: flex;
  flex: 1;
  flex-direction: column;
  min-width: 0;
  margin-left: 4px;
`

const WorkRow = styled.div`
  display: flex;
  flex: 1;
  min-height: 0;
`

const DrawBar = styled.div`
  align-self: flex-start;
  flex: none;
  width: 25px;
  margin-right: 4px;
  border: 1px solid #333;
  background: #ececec;
`

const Viewport = styled.div`
  display: flex;
  flex: 1;
  flex-direction: column;
  min-width: 0;
  border: solid #999;
  border-width: 0 0 0 2px;
`

const Canvas = styled.div`
  position: relative;
  flex: 1;
  min-height: 0;
  overflow: hidden;
  border-top: 2px solid #555;
  background: #000;
`

const Sheet = styled.svg`
  width: 100%;
  height: 100%;
`

const AxisText = styled.text`
  font: 700 11px 'Liberation Serif', serif;
  text-anchor: middle;
  fill: #fff;
`

const DimText = styled.text`
  font: 700 6px 'Liberation Serif', serif;
  text-anchor: middle;
  fill: #fff;
  stroke: #fff;
  stroke-width: 0.3px;
`

const UcsText = styled.text`
  font: 300 19px Roboto, sans-serif;
  text-anchor: middle;
  fill: #fff;
`

const ViewControls = styled.div`
  position: absolute;
  top: 4px;
  left: 4px;
  display: flex;
  gap: 3px;
  font-family: 'Noto Sans CJK SC', sans-serif;
  color: #d8d8d8;
`

const FloatStrip = styled.div`
  position: absolute;
  top: ${p => p.$y}px;
  left: ${p => p.$x}px;
  display: flex;
  height: 24px;
  border: 1px solid #333;
  background: #ececec;
`

const CloseButton = styled.button`
  width: 8px;
  padding-bottom: 8px;
  background: #5c5c5c;
  font: 700 10px/10px 'Liberation Sans', sans-serif;
  color: #fff;
`

const TabRow = styled.div`
  display: flex;
  flex: none;
  height: 17px;
  border-top: 1px solid #777;
  border-bottom: 1px solid #fff;
  background: #f0f0f0;
`

const TabNav = styled.button`
  display: flex;
  align-items: center;
  justify-content: center;
  gap: 1px;
  width: 14px;
  border-right: 1px solid #aaa;

  i {
    width: 1px;
    height: 9px;
    background: #555;
  }
`

const Tab = styled.button`
  position: relative;
  width: 46px;
  line-height: 15px;
  ${p => p.$active
    ? css`
        background: #000;
        color: #fff;
        font-weight: 700;
        clip-path: polygon(0 0, 100% 0, calc(100% - 6px) 100%, 6px 100%);
      `
    : css`
        padding-right: 6px;

        &::after {
          content: '';
          position: absolute;
          inset: 0 2px 0 auto;
          width: 1px;
          background: #333;
          transform: skewX(-22deg);
        }
      `}
`

const ScrollButton = styled.button`
  display: flex;
  align-items: center;
  width: 56px;
  margin-left: auto;
  padding-left: 10px;
  border-left: 1px solid #999;
  border-radius: 4px 0 0 4px;
`

const CommandLine = styled.div`
  flex: none;
  height: 2px;
  margin-top: 4px;
  background: #c8c8c8;
`

const Dialog = styled.form`
  position: absolute;
  top: 0;
  left: 0;
  width: 314px;
  height: 96px;
  padding: 0 6px 5px 2px;
  border-right: 1px solid #555;
  border-bottom: 1px solid #444;
  border-radius: 0 0 5px 0;
  background:
    radial-gradient(circle at 16px 24px, #c8504a 0, transparent 12px),
    radial-gradient(circle at 235px 90px, #777 0, transparent 12px),
    linear-gradient(90deg, #c9c6b8 0, #dcd9cc 60px, #a5a294 110px, #9c998b 150px, #aaa698 220px, #c8c4b2 290px, #ede5cc 308px);
`

const DialogTitle = styled.div`
  height: 24px;
  padding-left: 1px;
  line-height: 19px;
`

const DialogBody = styled.div`
  display: grid;
  grid-template-columns: 53px 63px 91px auto;
  grid-template-rows: 24px 24px;
  column-gap: 4px;
  align-items: center;
  height: 66px;
  padding: 7px 8px;
  border: 1px solid #666;
  background: #f0f0f0;
`

const FieldLabel = styled.label`
  color: #0a84e4;
  white-space: nowrap;
`

const TextField = styled.input`
  width: 100%;
  height: 18px;
  border: 1px solid #c4c8d4;
  border-radius: 2px;
  background: #fff;
`

const RuleBox = styled.div`
  display: flex;
  align-items: center;
  height: 20px;
  padding-right: 4px;
  border: 1px solid #555;
  border-radius: 3px;
  background: linear-gradient(#f4f4f4, #d4d4d4);

  select {
    flex: 1;
    min-width: 0;
    height: 18px;
    padding-left: 3px;
    appearance: none;
  }
`

const Choice = styled.label`
  display: flex;
  align-items: center;
  gap: 3px;
  color: ${p => (p.$off ? '#888' : '#000')};
  white-space: nowrap;

  input {
    flex: none;
    width: 13px;
    height: 13px;
    appearance: none;
    border: 1px solid ${p => (p.$off ? '#bbb' : '#8a8a8a')};
    background: linear-gradient(135deg, #ddd, #fff);
    box-shadow: inset 0 0 0 1px #f4f4f4;
  }

  input[type='radio'] {
    border-radius: 50%;
  }

  input[type='radio']:checked {
    background: radial-gradient(circle at 5px 5px, #8fd8f8 0, #0f4c7c 2px, #0f4c7c 3px, #eee 4px);
  }
`

const Pointer = styled.svg`
  position: absolute;
  top: 295px;
  left: 37px;
  pointer-events: none;
`
